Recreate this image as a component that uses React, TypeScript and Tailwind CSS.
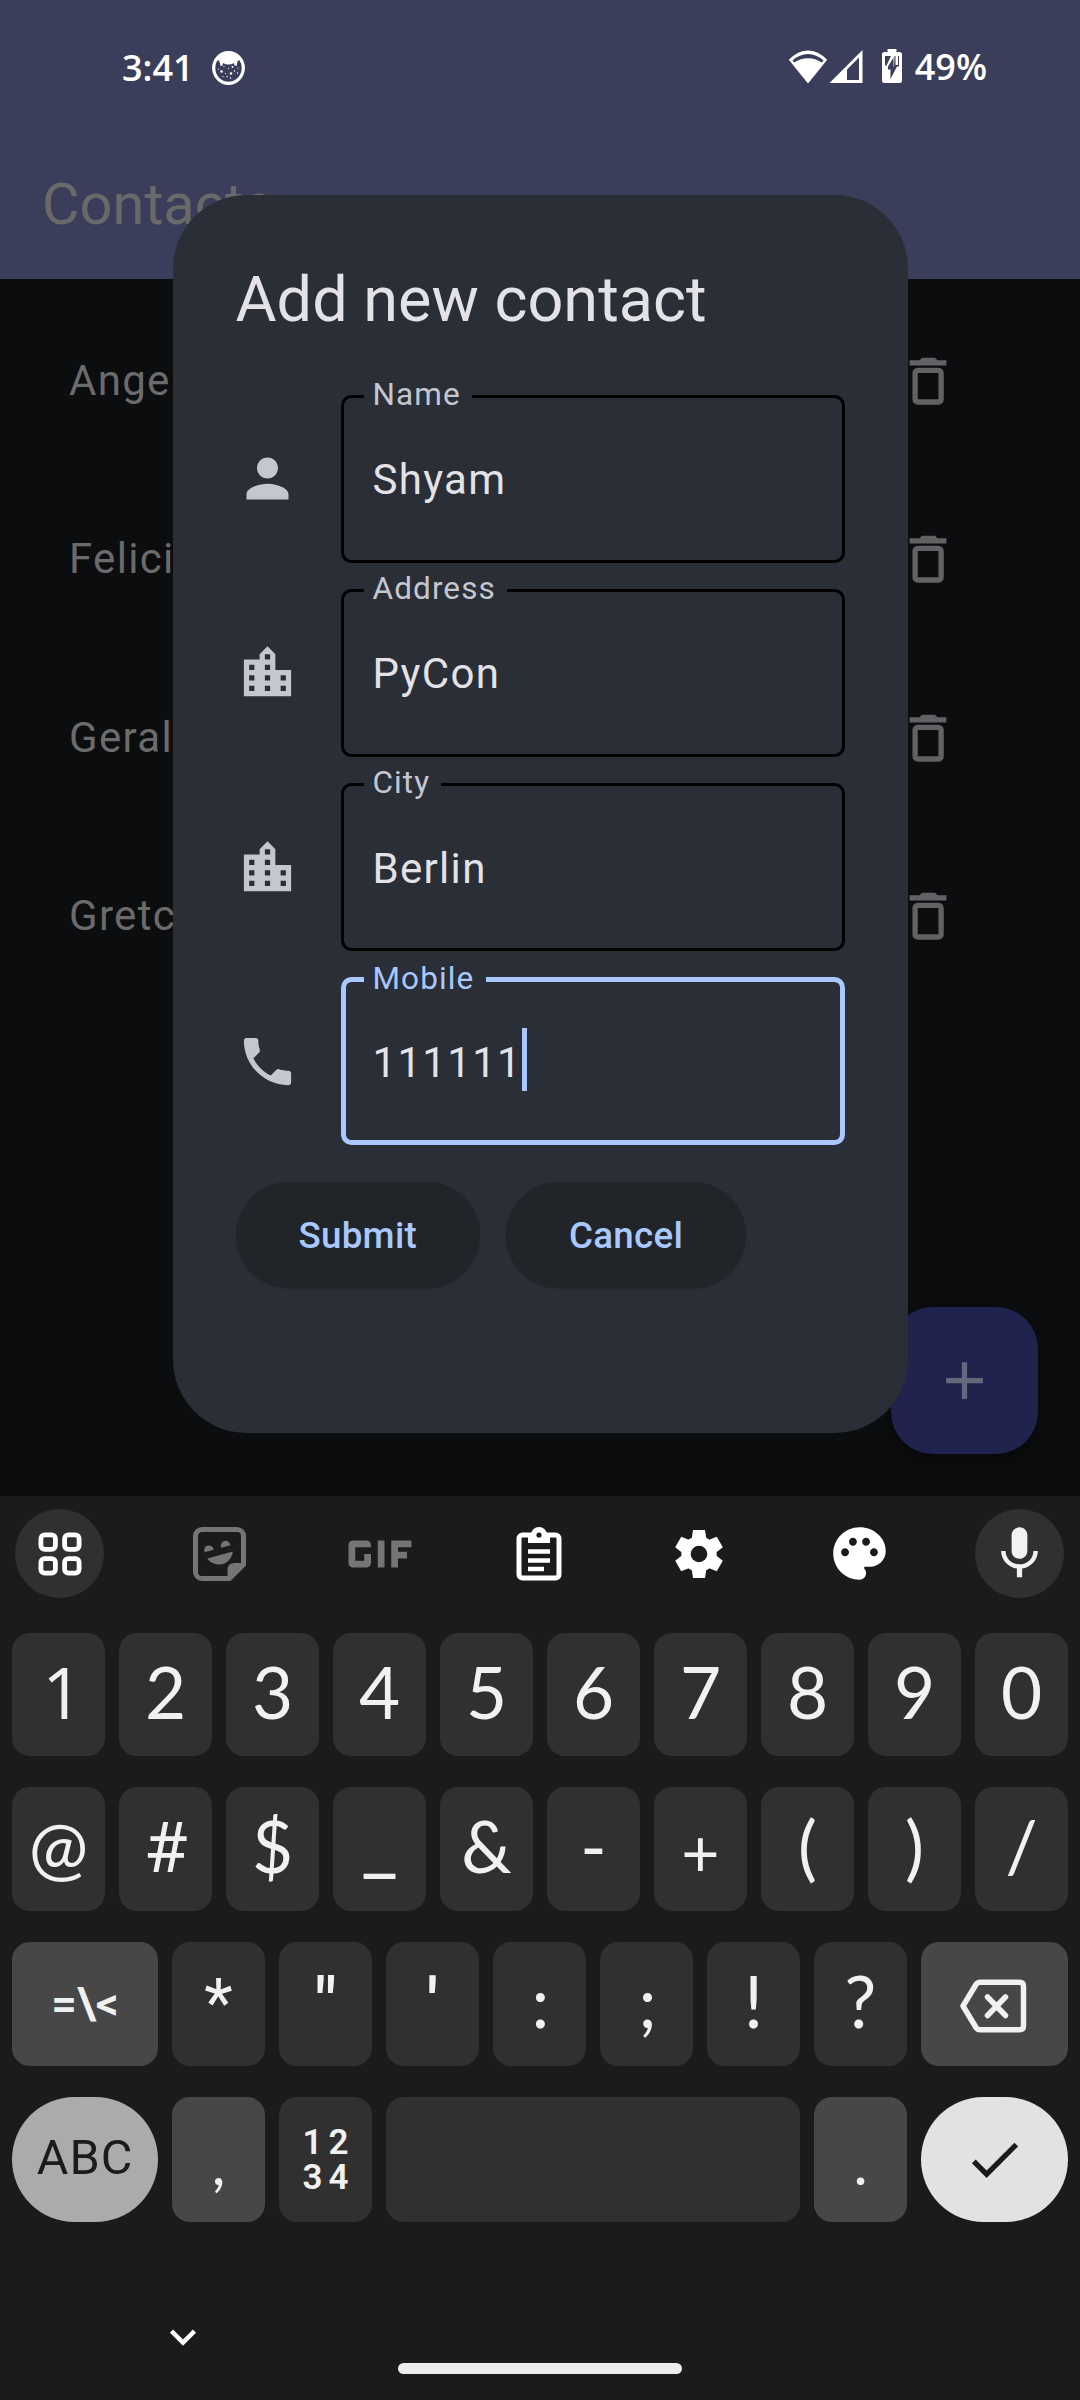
import type { ReactNode } from "react";
import {
  MdAdd,
  MdCheck,
  MdGif,
  MdKeyboardArrowDown,
  MdLocationCity,
  MdMic,
  MdPalette,
  MdPerson,
  MdPhone,
} from "react-icons/md";

const contacts = ["Angela", "Felicia", "Gerald", "Gretchen"];

function CatIcon() {
  return (
    <svg className="h-[34px] w-[33px]" viewBox="0 0 33 34">
      <ellipse cx="16.5" cy="17" rx="14.8" ry="15.3" fill="none" stroke="#fff" strokeWidth="3.2" />
      <path d="M5 8C8 3 12 1.500 16.500 1.500S25 3 28 8L25.500 10.500 24.500 15 22.500 14.500 22 12Q16.500 15 11 12L10.500 14.500 8.500 15 7.500 10.500Z" fill="#fff" />
      <g fill="#fff">
        <circle cx="9.500" cy="20.500" r="1.300" />
        <circle cx="19" cy="22.500" r="1.300" />
        <circle cx="20.500" cy="16" r=".9" />
        <circle cx="12" cy="15.500" r=".6" />
        <circle cx="16.500" cy="17.500" r=".6" />
        <circle cx="13.500" cy="22.500" r=".6" />
        <circle cx="6.500" cy="18" r=".6" />
        <circle cx="22.500" cy="20" r=".7" />
        <circle cx="25.500" cy="22" r=".7" />
        <circle cx="15" cy="25.500" r=".7" />
        <circle cx="18.500" cy="27" r=".7" />
        <circle cx="11" cy="25.500" r=".6" />
        <circle cx="26" cy="17" r=".6" />
      </g>
    </svg>
  );
}

function StatusBar() {
  return (
    <div className="flex h-[111px] items-start justify-between pt-[45px] pr-[93px] pl-[122px] text-white">
      <div className="flex items-center">
        <span className="w-[90px] font-['Open_Sans'] text-[36px] leading-[45px] font-semibold">3:41</span>
        <CatIcon />
      </div>
      <div className="flex items-start">
        <svg className="mt-[4px] h-[35px] w-[40px]" viewBox="0 0 40 35">
          <path d="M20 34.500L.800 10.800Q10 1.500 20 1.500T39.200 10.800Z" fill="#fff" />
          <path d="M4.500 11.500Q11.500 5 20 5T35.500 11.500L33.800 13.500Q27.500 9.200 20 9.200T6.200 13.500Z" fill="#3b3e5a" />
        </svg>
        <svg className="mt-[5px] ml-[1px] h-[34px] w-[34px]" viewBox="0 0 34 34">
          <path d="M.500 33L33.500 0V33Z" fill="#fff" />
          <path d="M18 19.500L30 7.500V30H18Z" fill="#3b3e5a" />
        </svg>
        <svg className="mt-[4px] ml-[19px] h-[34px] w-[20px]" viewBox="0 0 20 34">
          <path d="M5.500 3V0H14.500V3H17.500Q20 3 20 5.500V31.500Q20 34 17.500 34H2.500Q0 34 0 31.500V5.500Q0 3 2.500 3Z" fill="#fff" />
          <path d="M3 7H9L4.500 16.500H3ZM12.500 7H13.500V16H16V7H17V17.500H12ZM6 17.500L11.500 8.500V17.500H15L8.500 30V20.500H6Z" fill="#3b3e5a" />
        </svg>
        <span className="ml-[13px] font-['Open_Sans'] text-[36px] leading-[44px] font-semibold">49%</span>
      </div>
    </div>
  );
}

function TrashIcon() {
  return (
    <svg className="mt-[1px] h-[48px] w-[38px] shrink-0" viewBox="0 0 38 48" fill="none">
      <path d="M.600 3.200H10.500L13 .700H26L28.500 3.200H37.400V8.600H.600Z" fill="#616264" />
      <rect x="6.100" y="13.300" width="26" height="31.700" rx="2.600" stroke="#616264" strokeWidth="5.300" />
    </svg>
  );
}

function Field({ icon, label, value, active = false }: { icon: ReactNode; label: string; value: string; active?: boolean }) {
  return (
    <div className="flex items-center gap-[42px] text-[#c4c6d0]">
      {icon}
      <div
        className={
          active
            ? "relative flex h-[168px] w-[504px] items-center rounded-[10.500px] border-[5px] border-[#a8c8ff] pl-[27px]"
            : "relative flex h-[168px] w-[504px] items-center rounded-[10.500px] border-[3px] border-black pl-[29px]"
        }
      >
        <span
          className={
            active
              ? "absolute -top-[24px] left-[18px] bg-[#2a2e36] pr-[12px] pl-[9px] text-[31.500px] leading-[42px] tracking-[1.100px] text-[#a8c8ff]"
              : "absolute -top-[24px] left-[20px] bg-[#2a2e36] pr-[11px] pl-[9px] text-[31.500px] leading-[42px] tracking-[1.100px]"
          }
        >
          {label}
        </span>
        <span className="pt-[2px] text-[42px] leading-[63px] tracking-[1.310px] text-[#e3e2e6]">{value}</span>
        {active && <span className="mb-[4px] h-[63px] w-[5px] bg-[#a8c8ff]" />}
      </div>
    </div>
  );
}

function DialogButton({ children }: { children: ReactNode }) {
  return (
    <button className="h-[106px] rounded-full bg-[#212429] px-[63px] text-[36.750px] font-medium tracking-[0.260px] text-[#a8c8ff] shadow-[0_1px_2px_rgba(0,0,0,0.15)]">
      {children}
    </button>
  );
}

function ContactDialog() {
  const icon = "size-[63px] shrink-0";
  return (
    <div className="absolute top-[195px] left-[172.500px] h-[1238px] w-[735px] rounded-[73.500px] bg-[#2a2e36] px-[63px] pt-[62.500px]">
      <h2 className="text-[63px] leading-[84px] text-[#e3e2e6]">Add new contact</h2>
      <div className="mt-[53px] flex flex-col gap-[26.250px]">
        <Field icon={<MdPerson className={icon} />} label="Name" value="Shyam" />
        <Field icon={<MdLocationCity className={icon} />} label="Address" value="PyCon" />
        <Field icon={<MdLocationCity className={icon} />} label="City" value="Berlin" />
        <Field icon={<MdPhone className={icon} />} label="Mobile" value="111111" active />
      </div>
      <div className="mt-[37px] flex gap-[26px]">
        <DialogButton>Submit</DialogButton>
        <DialogButton>Cancel</DialogButton>
      </div>
    </div>
  );
}

function StickerIcon() {
  return (
    <svg className="h-[54px] w-[53px]" viewBox="0 0 53 54" preserveAspectRatio="none">
      <path d="M9 2.500H44A6.500 6.500 0 0 1 50.500 9V37.500L36.500 51.500H9A6.500 6.500 0 0 1 2.500 45V9A6.500 6.500 0 0 1 9 2.500Z" fill="none" stroke="#757575" strokeWidth="5" />
      <path d="M34.500 53V43Q34.500 36 41.500 36H52V38.500L37.500 53Z" fill="#757575" />
      <path d="M14.300 31.500L39.800 24.500C39 33 32 37.500 26.500 37.500C21 37.500 16.500 35 14.300 31.500Z" fill="#757575" />
      <path d="M11.600 25.300A4.800 4.800 0 1 1 20.700 22.800ZM28.300 20.700A4.800 4.800 0 1 1 37.400 18.200Z" fill="#757575" />
    </svg>
  );
}

function ClipboardIcon() {
  return (
    <svg className="mr-[1px] h-[54px] w-[46px]" viewBox="0 0 46 54">
      <rect x="3" y="8" width="40" height="43" rx="3.500" fill="none" stroke="#fff" strokeWidth="5" />
      <path d="M12 16V8H15A8 8 0 0 1 31 8H34V16Z" fill="#fff" />
      <circle cx="23" cy="8" r="2.600" fill="#1b1b1b" />
      <path d="M12 24.500H34M12 33.500H34M12 42H28" stroke="#fff" strokeWidth="4.500" />
    </svg>
  );
}

function GearIcon() {
  return (
    <svg className="mr-[1px] size-[48px]" viewBox="-24 -24 48 48">
      <circle r="13" fill="none" stroke="#fff" strokeWidth="9.400" />
      {[0, 60, 120, 180, 240, 300].map((a) => (
        <path key={a} d="M-7.500-14L-6-24H6L7.500-14Z" fill="#fff" transform={`rotate(${a})`} />
      ))}
    </svg>
  );
}

function GridIcon() {
  return (
    <svg className="size-[44px]" viewBox="0 0 44 44" fill="none" stroke="#fff" strokeWidth="4.800">
      <rect x="2.900" y="2.900" width="14.500" height="14.500" rx="3.800" />
      <rect x="26.600" y="2.900" width="14.500" height="14.500" rx="3.800" />
      <rect x="2.900" y="26.600" width="14.500" height="14.500" rx="3.800" />
      <rect x="26.600" y="26.600" width="14.500" height="14.500" rx="3.800" />
    </svg>
  );
}

function BackspaceIcon() {
  return (
    <svg className="mt-[4px] mr-[3px] h-[54px] w-[68px]" viewBox="0 0 68 54" fill="none" stroke="#f1f1f1" strokeWidth="5.500">
      <path d="M21 3.200H60.500Q64.500 3.200 64.500 7.200V46.800Q64.500 50.800 60.500 50.800H21Q18.500 50.800 17 48.500L4 27L17 5.500Q18.500 3.200 21 3.200Z" strokeLinejoin="round" />
      <path d="M28.500 18L46.500 36.500M46.500 18L28.500 36.500" strokeLinecap="round" />
    </svg>
  );
}

function Tool({ children, round = false }: { children: ReactNode; round?: boolean }) {
  return (
    <div
      className={
        round
          ? "flex size-[89px] items-center justify-center rounded-full bg-[#303030]"
          : "flex size-[89px] items-center justify-center text-white"
      }
    >
      {children}
    </div>
  );
}

const glyphStyles: Record<string, string> = {
  "1": "pl-[8px] font-['Open_Sans']",
  "#": "pt-[2px] font-[Roboto]",
  "_": "pt-[4px] font-[Roboto]",
  "*": "pt-[3px] font-[Roboto] text-[66px]",
  "\"": "pt-[3px] font-[Roboto] font-medium",
  "'": "pt-[3px] font-[Roboto] font-medium",
  "+": "pt-[6px] text-[66px]",
  ":": "pl-[2px]",
  ";": "pl-[2px]",
};

function Key({ glyph }: { glyph: string }) {
  return (
    <div className="flex h-full min-w-0 flex-1 justify-center rounded-[18px] bg-[#303030] font-[Lato] text-[71px] leading-[117px] text-[#f1f1f1]">
      <span className={glyphStyles[glyph] ?? ""}>{glyph}</span>
    </div>
  );
}

function Keyboard() {
  return (
    <div className="flex h-[904px] flex-col bg-[#1b1b1b] pt-[13px]">
      <div className="flex justify-between pr-[16px] pl-[15px]">
        <Tool round><GridIcon /></Tool>
        <Tool><StickerIcon /></Tool>
        <Tool><MdGif className="size-[108px] shrink-0 text-[#757575]" /></Tool>
        <Tool><ClipboardIcon /></Tool>
        <Tool><GearIcon /></Tool>
        <Tool><MdPalette className="size-[63px]" /></Tool>
        <Tool round><MdMic className="size-[63px] text-[#f1f1f1]" /></Tool>
      </div>
      <div className="mt-[35px] flex flex-col gap-[31px] px-[12px]">
        <div className="flex h-[123px] gap-[14px]">
          {"1234567890".split("").map((k) => <Key key={k} glyph={k} />)}
        </div>
        <div className="flex h-[124px] gap-[14px]">
          {"@#$_&-+()/".split("").map((k) => <Key key={k} glyph={k} />)}
        </div>
        <div className="flex h-[124px] gap-[14px]">
          <div className="flex w-[146px] items-center justify-center rounded-[18px] bg-[#474747] font-[Roboto] text-[45px] font-semibold text-[#f1f1f1]">=\&lt;</div>
          {"*\"':;!?".split("").map((k) => <Key key={k} glyph={k} />)}
          <div className="flex w-[147px] items-center justify-center rounded-[18px] bg-[#474747]"><BackspaceIcon /></div>
        </div>
        <div className="flex h-[125px] gap-[14px] font-[Lato] text-[#f1f1f1]">
          <div className="flex w-[146px] justify-center rounded-full bg-[#ababab] font-[Roboto] text-[48.500px] leading-[122px] tracking-[1px] text-[#1b1b1b]">ABC</div>
          <div className="flex w-[93px] justify-center rounded-[18px] bg-[#474747] text-[60px] leading-[130px]">,</div>
          <div className="flex w-[93px] items-center justify-center rounded-[18px] bg-[#303030] font-[Roboto] text-[35px] leading-[35px] font-semibold">
            <span className="ml-[4px] w-[54px] pl-[2px] tracking-[6px]">12 34</span>
          </div>
          <div className="flex-1 rounded-[18px] bg-[#303030]" />
          <div className="flex w-[93px] justify-center rounded-[18px] bg-[#474747] text-[60px] leading-[130px]">.</div>
          <div className="flex w-[147px] items-center justify-center rounded-full bg-[#e2e2e2] text-[#1b1b1b]"><MdCheck className="size-[63px]" /></div>
        </div>
      </div>
      <div className="relative flex flex-1 flex-col items-center justify-end pb-[26px]">
        <MdKeyboardArrowDown className="absolute top-[89px] left-[157px] size-[52px] text-white" />
        <div className="h-[11px] w-[284px] rounded-full bg-[#ececec]" />
      </div>
    </div>
  );
}

export default function App() {
  return (
    <div className="flex h-[2400px] w-[1080px] flex-col overflow-hidden bg-[#0b0d0f] font-[Roboto,sans-serif]">
      <div className="relative h-[1496px]">
        <header className="h-[279px] bg-[#3b3e5a]">
          <StatusBar />
          <h1 className="pt-[58px] pl-[42px] text-[57.750px] leading-[70px] text-[#696969]">Contacts</h1>
        </header>
        <ul className="pt-[12px]">
          {contacts.map((name) => (
            <li key={name} className="flex h-[178.500px] items-center justify-between pr-[133px] pl-[69px] text-[42px] tracking-[1.310px] text-[#6b6b6c]">
              {name}
              <TrashIcon />
            </li>
          ))}
        </ul>
        <button className="absolute top-[1307px] left-[891px] flex size-[147px] items-center justify-center rounded-[42px] bg-[#1f234e] text-[#64687a] shadow-[0_8px_16px_rgba(0,0,0,0.35)]">
          <MdAdd className="size-[63px]" />
        </button>
        <ContactDialog />
      </div>
      <Keyboard />
    </div>
  );
}
